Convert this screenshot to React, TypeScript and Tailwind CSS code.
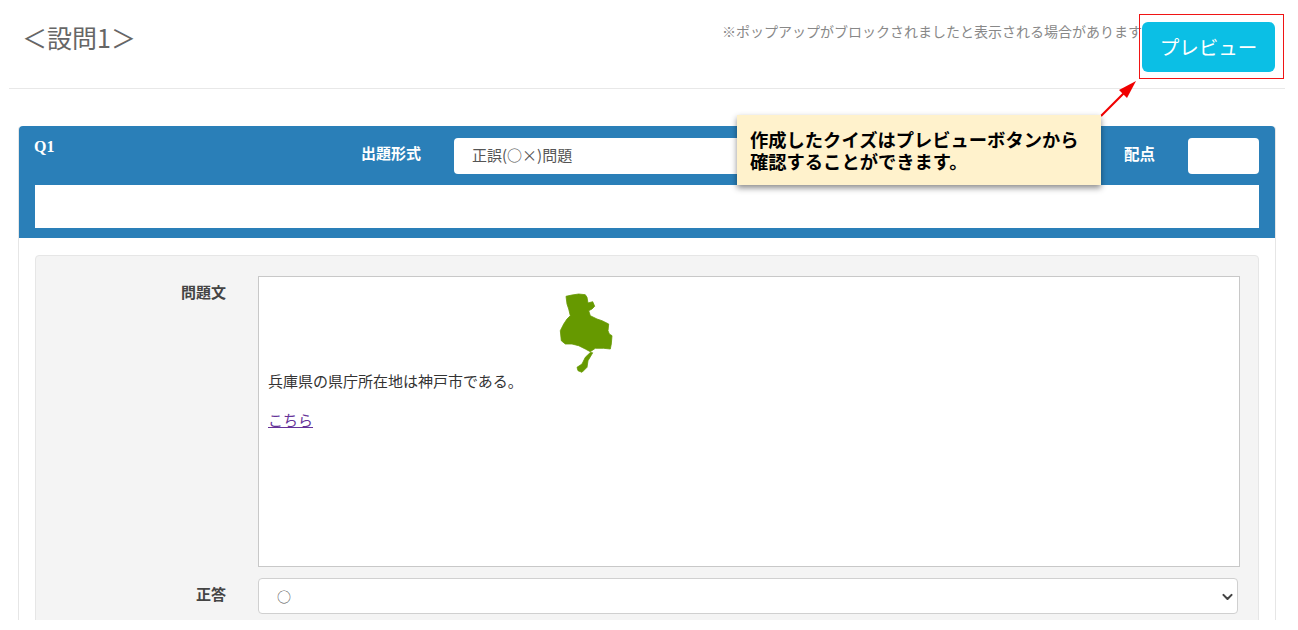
import React from "react";

const font = { fontFamily: '"Noto Sans CJK JP", "Noto Sans", sans-serif' };

export default function App() {
  return (
    <div className="relative h-[630px] w-[1298px] overflow-hidden bg-white text-[#333]" style={font}>
      <div className="h-[620px] w-[1294px] overflow-hidden">
        <header className="mx-[9px] flex h-[89px] items-start justify-between border-b border-[#e8e8e8]">
          <h1 className="mt-[18px] ml-[13px] text-[25px] leading-[38px] font-normal text-[#666]">＜設問1＞</h1>
          <div className="mr-[10px] flex items-start">
            <p className="mt-[21px] whitespace-nowrap text-[14px] leading-[20px] text-[#888]">
              ※ポップアップがブロックされましたと表示される場合があります
            </p>
            <button className="mt-[22px] h-[50px] w-[133px] rounded-[6px] bg-[#0bbfe5] text-[19.5px] text-white">プレビュー</button>
          </div>
        </header>

        <section className="mx-[18px] mt-[37px] rounded-t-[4px] border-x border-[#e6e6e6]">
          <div className="rounded-t-[4px] bg-[#2a7fb8] px-[16px] pt-[12px] pb-[10px]">
            <div className="flex h-[36px] items-start">
              <span className="-ml-[1px] w-[327px] text-[16px] leading-[18px] font-bold text-white" style={{ fontFamily: '"Liberation Serif", serif' }}>Q1</span>
              <span className="mt-[5px] w-[93px] text-[15px] leading-[20px] font-bold text-white">出題形式</span>
              <div className="flex h-[36px] w-[400px] items-center rounded-[4px] bg-white pl-[18px] text-[15px] text-[#555]">
                <span className="-mt-[2px]">正誤(○×)問題</span>
              </div>
              <span className="mt-[5px] ml-[270px] w-[64px] text-[15.5px] leading-[20px] font-bold text-white">配点</span>
              <div className="h-[36px] w-[71px] rounded-[4px] bg-white"></div>
            </div>
            <div className="mt-[11px] h-[43px] bg-white"></div>
          </div>

          <div className="px-[16px] pt-[17px]">
            <div className="rounded-[4px] border border-[#e6e6e6] bg-[#f4f4f4] pt-[20px] pr-[18px] pb-[20px]">
              <div className="flex items-start">
                <label className="mt-[6px] w-[190px] text-right text-[15px] leading-[20px] font-bold text-[#444]">問題文</label>
                <div className="ml-[32px] h-[291px] flex-1 border border-[#c8c8c8] bg-white px-[9px] pt-[17px] text-[15px] text-[#333]">
                  <svg viewBox="0 0 90 100" className="-mt-[10px] -mb-[13px] ml-[272px] block h-[100px] w-[90px]">
                    <g fill="#669900" stroke="#669900" strokeWidth="0.8" strokeLinejoin="round">
                      <path d="M26 12.3 L32 11 L38.7 10 L45.3 10.7 L47 13.3 L48 19 L52.7 17.7 L54.7 22.3 L52 25 L48.7 26.7 L50.3 31.7 L57 35 L62 36.7 L68.7 40 L68 46.7 L69.3 50 L72 51.7 L71.3 60 L70.3 65 L63.7 64.3 L55.3 64.3 L50.3 67.7 L45.3 65 L38.7 61.7 L32 60 L25.3 60 L21.3 56.7 L20.3 46.7 L23.7 40 L27 35 L30.3 31.7 L28.7 25 L27 20 Z" />
                      <path d="M50.3 68.5 L52.7 68.8 L48 76.7 L47 83.3 L42 88.3 L38 86.7 L37 83.3 L42 80 L45.3 73.3 Z" />
                    </g>
                  </svg>
                  <p className="text-[15px] leading-[20px]">兵庫県の県庁所在地は神戸市である。</p>
                  <a href="#" className="mt-[19px] block w-fit text-[15px] leading-[20px] text-[#663399] underline">こちら</a>
                </div>
              </div>
              <div className="mt-[11px] flex items-start">
                <label className="mt-[6px] w-[190px] text-right text-[15px] leading-[20px] font-bold text-[#444]">正答</label>
                <div className="mr-[2px] ml-[32px] flex h-[36px] flex-1 items-center justify-between rounded-[4px] border border-[#d0d0d0] bg-white pr-[3px] pl-[18px] text-[14px] text-[#555]">
                  <span>○</span>
                  <svg viewBox="0 0 16 16" className="h-[13px] w-[13px]" fill="none" stroke="#444" strokeWidth="2.6" strokeLinecap="round" strokeLinejoin="round">
                    <path d="M3 6 L8 11 L13 6" />
                  </svg>
                </div>
              </div>
            </div>
          </div>
        </section>
      </div>

      {/* annotation overlay */}
      <div className="absolute top-[14px] left-[1139px] h-[65px] w-[145px] border border-[#f01414]"></div>
      <svg className="absolute top-[78px] left-[1098px]" width="42" height="42" viewBox="0 0 42 42">
        <path d="M3 38 L30 11" stroke="#f00000" strokeWidth="2.2" />
        <path d="M38 3 L21 12 L29 20 Z" fill="#f00000" />
      </svg>
      <div className="absolute top-[115px] left-[737px] h-[70px] w-[364px] bg-[#fff2cc] pt-[13px] pl-[13px] text-[18.3px] leading-[22px] font-bold text-black shadow-[0_3px_6px_rgba(0,0,0,0.45)]">
        作成したクイズはプレビューボタンから<br />確認することができます。
      </div>
    </div>
  );
}
